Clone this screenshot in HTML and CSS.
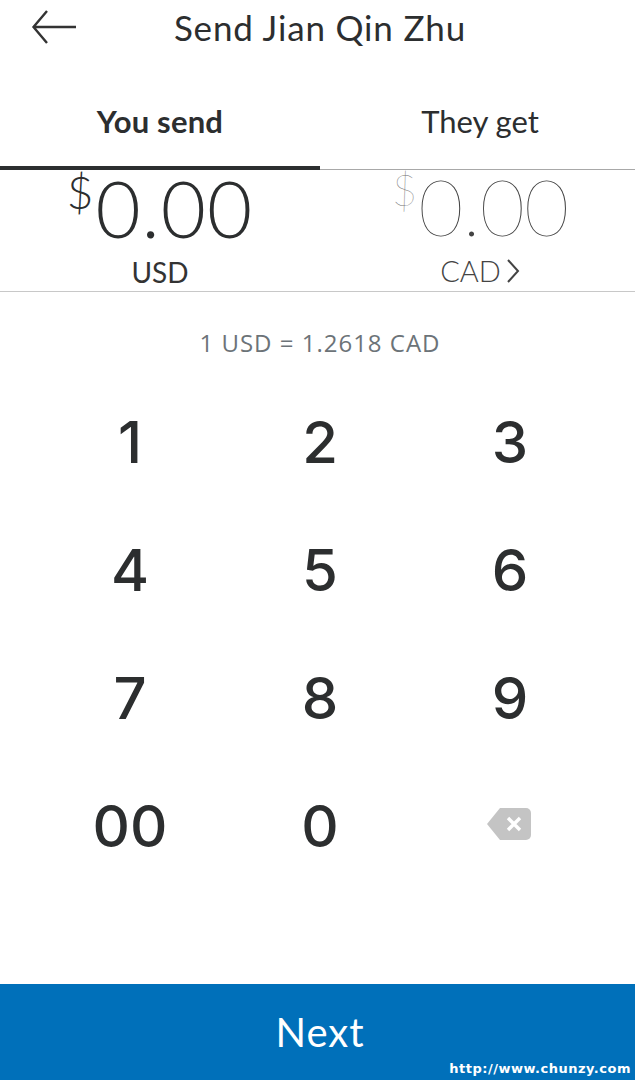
FILE: index.html
```html
<!DOCTYPE html>
<html lang="en">
<head>
    <meta charset="UTF-8">
    <meta name="viewport" content="width=device-width, initial-scale=1.0">
    <title>Send Jian Qin Zhu</title>
    <link rel="stylesheet" href="styles.css">
</head>
<body>
    <div class="screen">
        <header class="top-bar">
            <button class="back-button">
                <svg width="46" height="36" viewBox="0 0 46 36" fill="none" stroke="#333" stroke-width="2.4">
                    <path d="M45 18H3M16 2L2.500 18L16 34"/>
                </svg>
            </button>
            <h1>Send Jian Qin Zhu</h1>
        </header>

        <div class="tabs">
            <div class="tab active">You send</div>
            <div class="tab">They get</div>
        </div>

        <div class="amounts">
            <div class="amount">
                <div class="value"><span class="dollar">$</span>0.00</div>
                <div class="currency">USD</div>
            </div>
            <div class="amount light">
                <div class="value"><span class="dollar">$</span>0.00</div>
                <div class="currency">CAD
                    <svg width="14" height="24" viewBox="0 0 14 24" fill="none" stroke="#444" stroke-width="2">
                        <path d="M2 1L12 12L2 23"/>
                    </svg>
                </div>
            </div>
        </div>

        <p class="rate">1 USD = 1.2618 CAD</p>

        <div class="keypad">
            <button class="key">1</button>
            <button class="key">2</button>
            <button class="key">3</button>
            <button class="key">4</button>
            <button class="key">5</button>
            <button class="key">6</button>
            <button class="key">7</button>
            <button class="key">8</button>
            <button class="key">9</button>
            <button class="key">00</button>
            <button class="key">0</button>
            <button class="key">
                <svg class="delete-icon" width="46" height="32" viewBox="0 0 46 32">
                    <path d="M14 0H40a5 5 0 0 1 5 5V27a5 5 0 0 1-5 5H14L1 16Z" fill="#c4c4c4"/>
                    <path d="M22 10L34 22M34 10L22 22" stroke="#fff" stroke-width="3.400" fill="none"/>
                </svg>
            </button>
        </div>

        <button class="next-button">Next</button>
        <span class="site-link">http://www.chunzy.com</span>
    </div>
</body>
</html>
```

FILE: styles.css
```css
* {
    box-sizing: border-box;
}
body {
    margin: 0;
    overflow: hidden;
    font-family: Lato, "Open Sans", sans-serif;
    color: #2c2e2f;
    background-color: #fff;
}
button {
    padding: 0;
    border: none;
    background: none;
    font-family: inherit;
    color: inherit;
}
/* the app screen is a little wider than the window and gets cut on the right */
.screen {
    position: relative;
    display: flex;
    flex-direction: column;
    width: 640px;
    height: 1080px;
    overflow: hidden;
}
.top-bar {
    position: relative;
    display: flex;
    justify-content: center;
    align-items: center;
    height: 53px;
}
.top-bar h1 {
    margin: 0;
    font-size: 35px;
    font-weight: 400;
    letter-spacing: 0.85px;
}
.back-button {
    position: absolute;
    left: 31px;
    top: 9px;
    line-height: 0;
}
.tabs {
    display: flex;
    height: 117px;
    padding-top: 27px;
    border-bottom: 1px solid #a8a8a8;
}
.tab {
    flex: 1;
    margin-bottom: -1px;
    padding-top: 22px;
    text-align: center;
    font-size: 31px;
    line-height: 38px;
}
.tab.active {
    font-weight: 700;
    letter-spacing: 0.2px;
    border-bottom: 4px solid #2c2e2f;
}
.amounts {
    display: flex;
    height: 122px;
    border-bottom: 1px solid #c8c8c8;
}
.amount {
    flex: 1;
    display: flex;
    flex-direction: column;
    align-items: center;
}
.value {
    display: flex;
    align-items: flex-start;
    height: 78px;
    font-size: 78px;
    line-height: 76px;
    letter-spacing: 1px;
    font-weight: 300;
}
.dollar {
    font-size: 46px;
    line-height: 44px;
    margin-right: 1px;
}
.light .value {
    line-height: 72px;
    letter-spacing: -1px;
    font-weight: 100;
    color: #444;
}
.light .dollar {
    font-size: 44px;
    line-height: 38px;
    margin-right: 2px;
    color: #777;
}
.currency {
    display: flex;
    align-items: center;
    gap: 5px;
    margin-top: 8px;
    font-size: 28px;
    line-height: 32px;
    color: #333;
}
.light .currency {
    margin-top: 7px;
    font-size: 29px;
    color: #444;
    font-weight: 300;
}
.rate {
    margin: 34px 0 0;
    text-align: center;
    font-family: "Open Sans", sans-serif;
    font-size: 24px;
    line-height: 34px;
    letter-spacing: 1px;
    color: #6c7378;
}
.keypad {
    display: grid;
    grid-template-columns: repeat(3, 190px);
    grid-auto-rows: 128px;
    justify-content: center;
    margin-top: 18px;
}
.key {
    display: flex;
    justify-content: center;
    align-items: center;
    font-family: Inter, sans-serif;
    font-size: 58px;
    font-weight: 500;
}
.delete-icon {
    margin: 0 2px 4px 0;
}
.next-button {
    height: 96px;
    margin-top: auto;
    font-size: 40px;
    letter-spacing: 1px;
    color: #fff;
    background-color: #0070ba;
}
.site-link {
    position: absolute;
    right: 9px;
    bottom: 4px;
    font-family: "DejaVu Sans", sans-serif;
    font-size: 13px;
    font-weight: 700;
    letter-spacing: 0.5px;
    color: #fff;
}
```
